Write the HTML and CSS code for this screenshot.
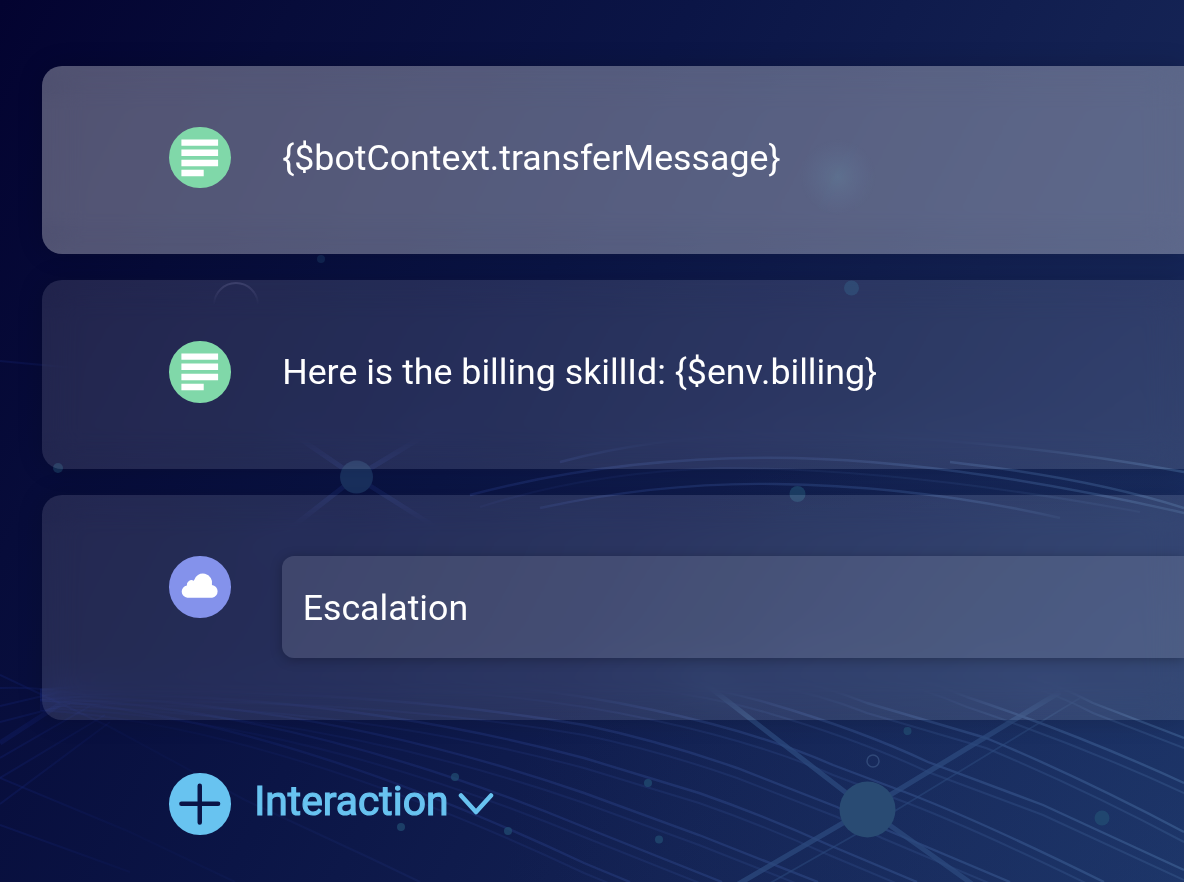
FILE: index.html
```html
<!DOCTYPE html>
<html lang="en">
<head>
<meta charset="utf-8">
<title>Interactions</title>
<link rel="stylesheet" href="styles.css">
</head>
<body>
<svg class="backdrop" viewBox="0 0 1184 882" aria-hidden="true">
  <defs>
    <radialGradient id="glow"><stop offset="0" stop-color="#6c9cb0" stop-opacity=".24"/><stop offset=".45" stop-color="#6c94b0" stop-opacity=".13"/><stop offset="1" stop-color="#6c8cb0" stop-opacity="0"/></radialGradient>
    <linearGradient id="wave" gradientUnits="userSpaceOnUse" x1="0" y1="0" x2="1184" y2="0"><stop offset="0" stop-color="#2038a8" stop-opacity=".4"/><stop offset=".12" stop-color="#2038a8" stop-opacity=".12"/><stop offset=".4" stop-color="#3048a0" stop-opacity=".38"/><stop offset="1" stop-color="#5a86b8" stop-opacity=".5"/></linearGradient>
    <g id="strands">
      <path d="M40 690Q400 655 653 710Q760 733 833 765L894 788Q970 816 1104 882"/>
      <path d="M400 675Q620 660 768 703Q860 730 928 762L1043 805L1184 870"/>
      <path d="M600 660Q760 660 867 703L986 738Q1080 777 1184 832"/>
      <path d="M780 650Q880 660 967 697Q1080 735 1184 783"/>
      <path d="M960 660Q1030 670 1093 703L1184 738"/>
      <path d="M40 692Q350 685 584 725Q660 741 737 768L837 807L882 828L1010 882"/>
      <path d="M40 694Q330 690 584 758L699 793Q765 816 829 845L917 882"/>
      <path d="M40 696Q310 698 584 793L699 835L818 882"/>
      <path d="M40 698Q290 706 584 827L722 882"/>
      <path d="M40 700Q270 715 584 863L630 882"/>
    </g>
  </defs>
  <g class="strands"><use href="#strands" class="strand-main"/><use href="#strands" class="strand-faint" y="10"/></g>
  <g class="strands strand-faint">
    <path d="M0 675L110 727L245 800L370 858L420 882M0 778L130 832L235 882M0 825L130 872"/>
    <path d="M0 688Q40 686 90 696M0 706L60 692M0 722L70 704M0 758L90 706M0 778L105 715M0 804L110 722"/>
    <path class="bright" d="M0 743L60 704"/>
    <path d="M0 361L85 369"/>
  </g>
  <g class="strands strand-main">
    <path d="M470 495Q620 455 795 458Q960 462 1184 513M560 462Q680 430 830 434Q1010 440 1184 472"/>
    <path d="M540 508Q660 482 775 484Q920 486 1060 518M950 462Q1090 478 1184 508"/>
    <path d="M480 507Q590 472 720 468Q900 468 1140 512" class="strand-faint"/>
  </g>
  <g class="links">
    <path d="M690 672L867 809L975 886M1060 692L867 809L735 886"/>
    <path class="thin" d="M1080 698L867 828L765 886"/>
    <path class="dim" d="M250 560L356 477L440 530M280 425L356 477L450 420"/>
  </g>
  <circle cx="867.5" cy="809.5" r="28" fill="#294b73"/>
  <circle cx="356.500" cy="477" r="16.500" fill="#1a3160"/>
  <g class="dots">
    <circle cx="455" cy="777" r="4"/><circle cx="401" cy="827" r="4"/><circle cx="508" cy="831" r="4"/>
    <circle cx="648" cy="783" r="4"/><circle cx="659" cy="839.5" r="4"/><circle cx="907.500" cy="731" r="4"/>
    <circle cx="1102" cy="818" r="7.5"/><circle cx="797.500" cy="494" r="8"/>
    <circle cx="321" cy="259" r="4" opacity=".5"/><circle cx="58" cy="468" r="5" opacity=".7"/>
  </g>
  <circle class="ring" cx="873" cy="761" r="6"/>
</svg>

<main class="flow">
  <section class="card card-active">
    <span class="badge badge-text"><svg viewBox="0 0 62 62"><path d="M12.500 12.500h37v6.500h-37zM12.500 22.800h37v6.500h-37zM12.500 33h37v6.500h-37zM12.500 43.200h22.500v6.500h-22.500z"/></svg></span>
    <p class="message">{$botContext.transferMessage}</p>
  </section>
  <section class="card">
    <span class="badge badge-text"><svg viewBox="0 0 62 62"><path d="M12.500 12.500h37v6.500h-37zM12.500 22.800h37v6.500h-37zM12.500 33h37v6.500h-37zM12.500 43.200h22.500v6.500h-22.500z"/></svg></span>
    <p class="message">Here is the billing skillId: {$env.billing}</p>
  </section>
  <section class="card card-tall">
    <span class="badge badge-cloud"><svg viewBox="0 0 62 62"><path d="M18.500 42a6.200 6.200 0 0 1-.5-12.300A4.700 4.700 0 0 1 25 25a9.300 9.300 0 0 1 18.300 4.300A6.400 6.400 0 0 1 43.500 42z"/></svg></span>
    <div class="field">Escalation</div>
  </section>
  <div class="add">
    <span class="badge badge-add"><svg viewBox="0 0 62 62"><path d="M31 12.800v37M12.500 31h37"/></svg></span>
    <span class="add-label">Interaction</span>
    <svg class="chevron" viewBox="0 0 36 22"><path d="M3 2.500L18 19L33 2.500"/></svg>
  </div>
</main>
<svg class="overlay" viewBox="0 0 1184 882" aria-hidden="true">
  <defs><linearGradient id="fade" x1="0" y1="0" x2="0" y2="1"><stop offset="0" stop-color="#6a6a98" stop-opacity=".35"/><stop offset="1" stop-color="#6a6a98" stop-opacity="0"/></linearGradient></defs>
  <circle cx="838" cy="177" r="38" fill="url(#glow)"/>
  <circle cx="851.500" cy="288" r="7.500" fill="#387398" opacity=".32"/>
  <path d="M214 305A22 22 0 0 1 258 305" fill="none" stroke="url(#fade)" stroke-width="2"/>
</svg>
</body>
</html>
```
FILE: styles.css
```css
* { box-sizing: border-box; }

body {
  margin: 0;
  width: 1184px;
  height: 882px;
  overflow: hidden;
  position: relative;
  color: #fff;
  font-family: Roboto, "Liberation Sans", sans-serif;
  background:
    radial-gradient(ellipse 800px 600px at 1300px 900px, rgba(38, 76, 128, .33), transparent),
    linear-gradient(118deg, #030330 0%, #070c3a 18%, #0b1546 42%, #132152 68%, #1a2d60 100%);
}

.backdrop, .overlay {
  position: absolute;
  inset: 0;
  width: 1184px;
  height: 882px;
}

.overlay { pointer-events: none; }
.strands { fill: none; stroke: url(#wave); }
.strand-main { stroke-width: 2.400; opacity: .7; }
.strand-faint { stroke-width: 2; opacity: .42; }
.bright { stroke-width: 5; }
.links { fill: none; stroke: #2c4a7e; stroke-width: 5; opacity: .75; }
.links .thin { stroke-width: 2; opacity: .7; }
.links .dim { stroke: #203078; opacity: .45; }
.dots { fill: #235075; opacity: .7; }
.ring { fill: none; stroke: #304878; stroke-width: 1.500; }

.flow {
  position: relative;
  display: flex;
  flex-direction: column;
  gap: 26px;
  padding: 65.600px 0 0 41.600px;
}

.card {
  position: relative;
  display: flex;
  align-items: flex-start;
  gap: 51.500px;
  height: 188.800px;
  padding: 61px 0 0 127.600px;
  border-radius: 20px 0 0 20px;
  background: rgba(255, 255, 255, .115);
  box-shadow: 0 0 26px rgba(0, 0, 0, .16);
}

/* Frosts the middle of the card and leaves its edges clear. */
.card::before {
  content: "";
  position: absolute;
  inset: 0;
  border-radius: inherit;
  backdrop-filter: blur(18px);
  mask-image: linear-gradient(transparent, #000 28px, #000 calc(100% - 28px), transparent);
}

.card > * { position: relative; }
.card-active { background: rgba(255, 255, 255, .31); }
.card-tall { height: 224.600px; }

.badge {
  flex: none;
  width: 61.500px;
  height: 61.500px;
  border-radius: 50%;
}

.badge svg { display: block; fill: #fff; }
.badge-text { background: #80d8a9; }
.badge-cloud { background: #8492eb; }
.badge-add { background: #68c3f0; }
.badge-add svg { fill: none; stroke: #0a1446; stroke-width: 4.500; stroke-linecap: round; }

.message {
  margin: 0;
  font-size: 35.720px;
  line-height: 63px;
  white-space: nowrap;
}

.field {
  flex: 1;
  height: 102px;
  padding-left: 20.500px;
  font-size: 35.720px;
  line-height: 104px;
  border-radius: 12px 0 0 12px;
  background: rgba(255, 255, 255, .12);
  box-shadow: 0 2px 12px rgba(0, 0, 0, .25);
}

.add {
  display: flex;
  align-items: center;
  padding: 27.500px 0 0 127.600px;
  color: #68c3f0;
}

.add-label {
  margin: -6px 10px 0 23.500px;
  font-size: 40.800px;
  -webkit-text-stroke: 1.200px #68c3f0;
}

.chevron {
  width: 36px;
  height: 22px;
  fill: none;
  stroke: #68c3f0;
  stroke-width: 4.500;
  stroke-linecap: round;
  stroke-linejoin: round;
}
```
